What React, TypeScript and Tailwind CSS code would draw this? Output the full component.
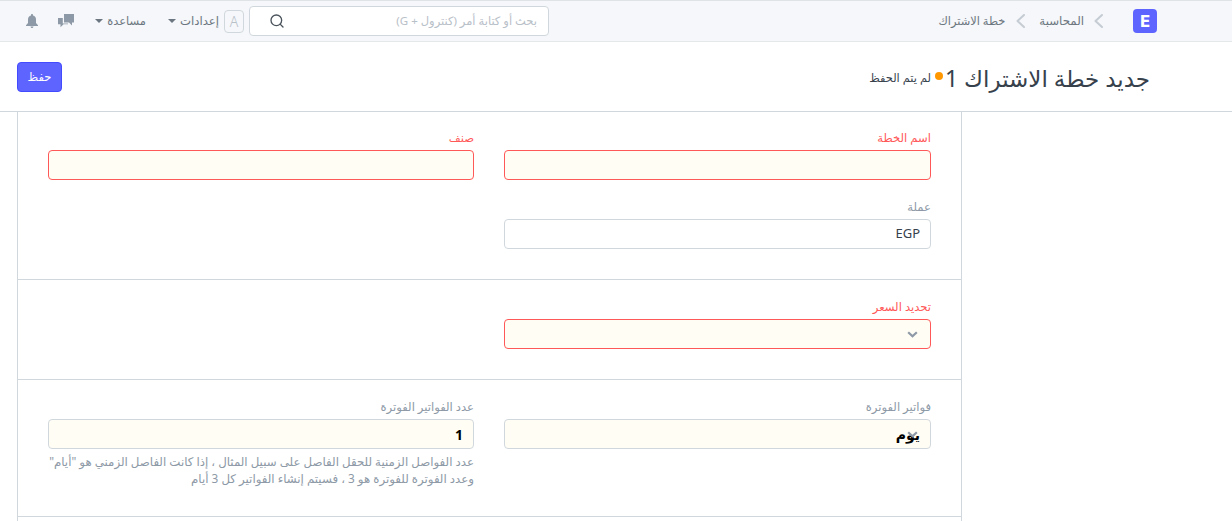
import React from "react";
import { Search } from "lucide-react";

const font = "font-['Noto_Sans','DejaVu_Sans',sans-serif]";

function Caret() {
  return <span className="inline-block w-0 h-0 border-x-[4px] border-x-transparent border-t-[4px] border-t-[#6c7680]" />;
}

function Crumb() {
  return (
    <svg viewBox="0 0 9 14" className="w-[9px] h-[14px] text-[#c5ccd3]" fill="none" stroke="currentColor" strokeWidth="2" strokeLinecap="round" strokeLinejoin="round">
      <path d="M8 1L1.500 7L8 13" />
    </svg>
  );
}

function Field({ label, value, error, bg, select, bold, children }: { label: string; value?: string; error?: boolean; bg?: boolean; select?: boolean; bold?: boolean; children?: React.ReactNode }) {
  return (
    <div>
      <div className={`h-[20px] text-[11.6px] leading-[15px] ${error ? "text-[#ff5858]" : "text-[#8d99a6]"}`}>{label}</div>
      <div className={`relative h-[30px] rounded-[4px] border px-[10px] flex items-center ${error ? "border-[#ff5858]" : "border-[#d1d8dd]"} ${bg ? "bg-[#fffdf4]" : "bg-white"} ${bold ? "font-bold text-black text-[14px]" : "text-[#36414c] text-[13px]"}`}>
        {value}
        {select && (
          <svg viewBox="0 0 11 7" className="absolute right-[12px] top-[11px] w-[11px] h-[7px] text-[#8d99a6]" fill="none" stroke="currentColor" strokeWidth="2.200">
            <path d="M1.200 1.200L5.500 5.300L9.800 1.200" />
          </svg>
        )}
      </div>
      {children}
    </div>
  );
}

export default function App() {
  return (
    <div dir="rtl" className={`${font} w-[1232px] h-[521px] overflow-hidden bg-white text-[#36414c]`}>
      <header className="h-[42px] bg-[#f5f7fa] border-t border-t-[#dfe3e6] border-b border-b-[#e4e8eb] flex items-center justify-between pr-[75px] pl-[26px]">
        <div className="flex items-center">
          <div className="w-[24px] h-[24px] rounded-[4px] bg-[#5e64ff] text-white text-[16px] font-['Inter',sans-serif] font-extrabold flex items-center justify-center ml-[30px]">E</div>
          <Crumb />
          <span className="text-[11.8px] font-medium text-[#6c7680] mr-[10px] ml-[14px]">المحاسبة</span>
          <Crumb />
          <span className="text-[11.4px] font-medium text-[#6c7680] mr-[11px]">خطة الاشتراك</span>
        </div>
        <div className="flex items-center">
          <div className="relative w-[300px] h-[30px] rounded-[4px] border border-[#d1d8dd] bg-white flex items-center pr-[11px] text-[11.5px] text-[#b8c0c8]">
            بحث أو كتابة أمر (كنترول + G)
            <Search size={16} strokeWidth={2} className="absolute left-[19px] top-[6px] text-[#4a535c]" />
          </div>
          <div className="w-[20px] h-[23px] mr-[5px] rounded-[4px] border border-[#d1d8dd] text-[14px] font-light text-[#b8c0c8] flex items-center justify-center">A</div>
          <span className="w-[39px] text-[11.7px] font-medium text-[#6c7680] mr-[5px] ml-[4px] whitespace-nowrap">إعدادات</span>
          <Caret />
          <span className="w-[38px] text-[11.500px] font-medium text-[#6c7680] mr-[22px] ml-[5px] whitespace-nowrap">مساعدة</span>
          <Caret />
          <svg viewBox="0 0 16 14" className="w-[16px] h-[14px] mr-[21px] text-[#8d99a6]" fill="currentColor">
            <path d="M6 0h10v8.500h-2v3l-3-3H6z" />
            <path d="M0 4h4.800v5.500H10v.8H5.500l-3 3v-3H0z" />
          </svg>
          <svg viewBox="0 0 12 14" className="w-[12px] h-[14px] mr-[20px] text-[#8d99a6]" fill="currentColor">
            <path d="M6 0c.6 0 1 .4 1 1v.4c2 .5 3 2 3 4V9l2 2.200V12H0v-.8L2 9V5.400c0-2 1-3.500 3-4V1c0-.6.4-1 1-1zM4.500 12.500h3C7.500 13.400 6.800 14 6 14s-1.500-.6-1.500-1.500z" />
          </svg>
        </div>
      </header>

      <div className="h-[70px] border-b border-[#d1d8dd] flex items-center justify-between pr-[82px] pl-[17px]">
        <div className="flex items-center">
          <h1 className="text-[23px] leading-[30px] mt-[2px] font-normal text-[#36414c]">جديد خطة الاشتراك 1</h1>
          <span className="w-[8px] h-[8px] rounded-full bg-[#ff9800] mr-[2px] mt-[-2px]" />
          <span className="text-[11.4px] font-medium text-[#36414c] mr-[4px] mt-[3px]">لم يتم الحفظ</span>
        </div>
        <button className="w-[45px] h-[30px] rounded-[4px] bg-[#5e64ff] border border-[#444bff] text-white text-[11.5px]">حفظ</button>
      </div>

      <div className="flex">
        <aside className="w-[270px] shrink-0" />
        <main className="w-[945px] h-[420px] border-x border-[#d1d8dd]">
          <section className="px-[30px] pt-[18px] h-[168px] border-b border-[#d1d8dd]">
            <div className="grid grid-cols-[427px_426px] gap-x-[30px] gap-y-[19px]">
              <Field label="اسم الخطة" error bg />
              <Field label="صنف" error bg />
              <Field label="عملة" value="EGP" />
            </div>
          </section>
          <section className="px-[30px] pt-[19px] h-[100px] border-b border-[#d1d8dd]">
            <div className="grid grid-cols-[427px_426px] gap-x-[30px]">
              <Field label="تحديد السعر" error bg select />
            </div>
          </section>
          <section className="px-[30px] pt-[19px] h-[137px] border-b border-[#d1d8dd]">
            <div className="grid grid-cols-[427px_426px] gap-x-[30px]">
              <Field label="فواتير الفوترة" value="يوم" bg bold select />
              <Field label="عدد الفواتير الفوترة" value="1" bg bold>
                <p className="mt-[4px] text-[11.8px] leading-[17px] text-[#8d99a6]">
                  عدد الفواصل الزمنية للحقل الفاصل على سبيل المثال ، إذا كانت الفاصل الزمني هو "أيام" وعدد الفوترة للفوترة هو 3 ، فسيتم إنشاء الفواتير كل 3 أيام
                </p>
              </Field>
            </div>
          </section>
        </main>
      </div>
    </div>
  );
}
